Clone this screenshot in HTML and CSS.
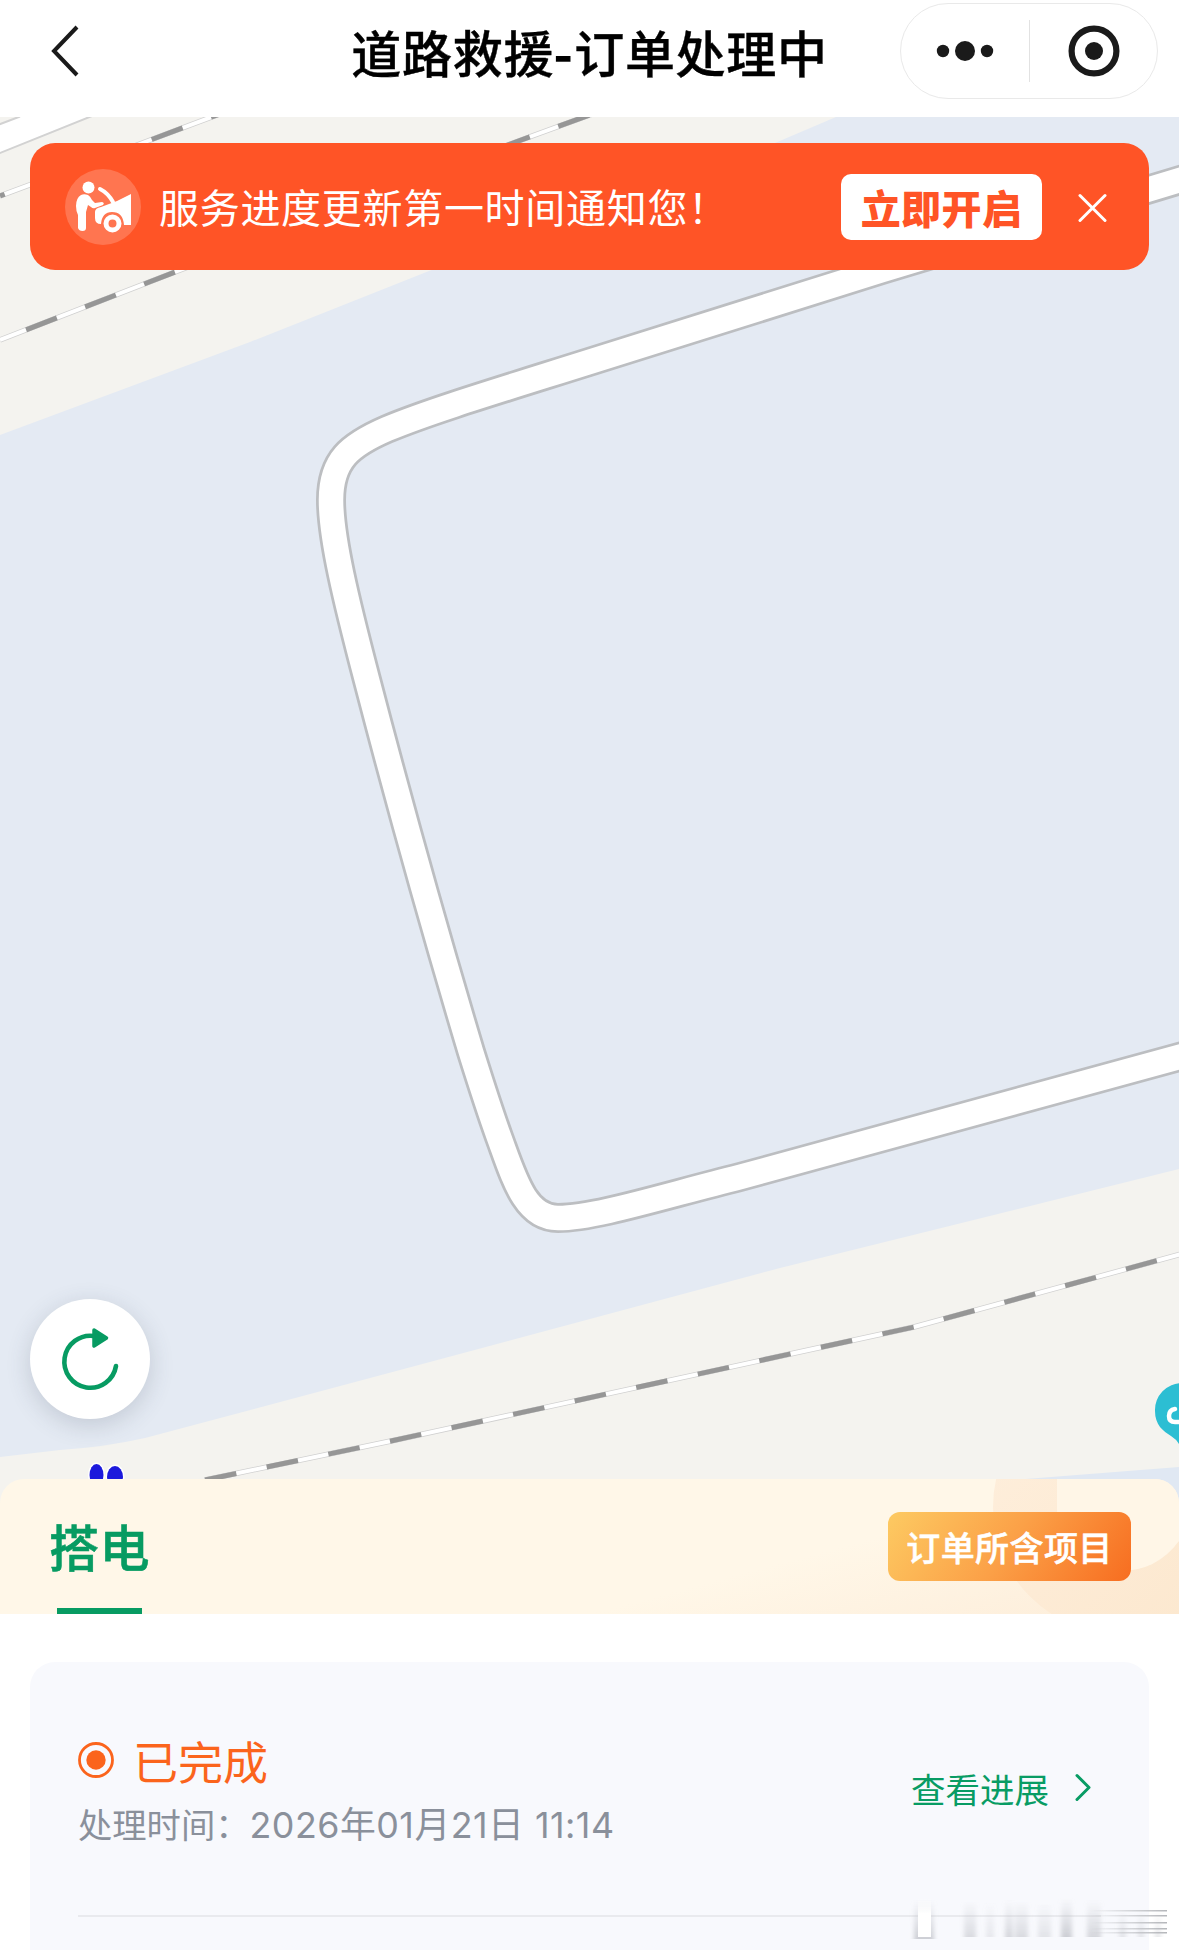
FILE: index.html
```html
<!DOCTYPE html>
<html lang="zh-CN">

<head>
  <meta charset="UTF-8" />
  <meta name="viewport" content="width=device-width, initial-scale=1.0" />
  <title>道路救援-订单处理中</title>
  <link rel="stylesheet" href="styles.css">
</head>

<body>
  <header class="navbar">
    <svg class="back" viewBox="0 0 30 54" width="30" height="54">
      <path d="M27 3 4 27l23 24" fill="none" stroke="#1a1a1a" stroke-width="4" />
    </svg>
    <h1 class="title">道路救援<span class="dash">-</span>订单处理中</h1>
    <div class="capsule">
      <svg class="capsule-item" viewBox="0 0 128 94">
        <circle cx="42" cy="47" r="6.2" />
        <circle cx="64" cy="47" r="10" />
        <circle cx="86" cy="47" r="6.2" />
      </svg>
      <span class="capsule-line"></span>
      <svg class="capsule-item" viewBox="0 0 128 94">
        <circle cx="65" cy="47" r="22.4" fill="none" stroke="#1a1a1a" stroke-width="6.2" />
        <circle cx="65" cy="47" r="9" />
      </svg>
    </div>
  </header>

  <section class="map">
    <svg class="map-canvas" viewBox="0 117 1179 1390" width="1179" height="1390">
      <!-- land -->
      <path class="land" d="M0 117H836L775 143 429 271 250 342 0 435Z" />
      <path class="land" d="M0 1457 60 1450Q105 1447 145 1438L400 1370 780 1268 1179 1169V1507H0Z" />
      <path d="M1000 1481 1179 1467V1507H1000Z" fill="#e0e8f3" />

      <!-- small road in the corner -->
      <path d="M-5 126 19 117H90L-5 155Z" fill="#fff" />
      <path d="M-5 126 20 116.500M-5 155 92 116" fill="none" stroke="#d2d2d2" stroke-width="2" />

      <!-- railways -->
      <g class="rail">
        <path class="rail-edge" d="M0 340 175 272 513 143 595 113" />
        <path class="rail-gap" d="M0 340 175 272 513 143 595 113" />
        <path class="rail-dash" d="M0 340 175 272 513 143 595 113" stroke-dasharray="33 30.300" stroke-dashoffset="-28" />

        <path class="rail-edge" d="M0 196 137 145 225 112" />
        <path class="rail-gap" d="M0 196 137 145 225 112" />
        <path class="rail-dash" d="M0 196 137 145 225 112" stroke-dasharray="33 30.300" stroke-dashoffset="28" />

        <path class="rail-edge" d="M205 1480 391 1441 914 1327 1185 1253" />
        <path class="rail-gap" d="M205 1480 391 1441 914 1327 1185 1253" />
        <path class="rail-dash" d="M205 1480 391 1441 914 1327 1185 1253" stroke-dasharray="32 31" />
      </g>

      <!-- main road, casing then fill -->
      <path class="road-casing" d="M1190 177 882 270 589 362C500 390 430 411 387 429 350 445 331 460 331 500 331 538 346 600 367 680Q416 868 471 1052C481 1084 490 1112 499 1137 514 1178 525 1218 558 1218 595 1218 660 1197 740 1177L1190 1054" />
      <path class="road-fill" d="M1190 177 882 270 589 362C500 390 430 411 387 429 350 445 331 460 331 500 331 538 346 600 367 680Q416 868 471 1052C481 1084 490 1112 499 1137 514 1178 525 1218 558 1218 595 1218 660 1197 740 1177L1190 1054" />

      <!-- markers -->
      <g fill="#1c19dc" stroke="#fff" stroke-width="3" paint-order="stroke">
        <ellipse cx="96.500" cy="1475" rx="7" ry="11" />
        <ellipse cx="115" cy="1477" rx="8" ry="11" />
      </g>
      <path d="M1182 1383a27 27 0 0 0-27 28c0 14 8 20 16 25q5 3 8 8h8v-61Z" fill="#2cbed3" />
      <path d="M1175 1409q-6 1-6 7 0 6 6 6h8" fill="none" stroke="#fff" stroke-width="4.500" stroke-linecap="round" />
    </svg>

    <div class="notice">
      <svg class="notice-icon" viewBox="0 0 76 76" width="76" height="76">
        <circle cx="38" cy="38" r="38" fill="#ff7550" />
        <g fill="#fff">
          <circle cx="23.500" cy="18.500" r="6" />
          <path d="M16 26q3-1.500 7 0 2 1 4 5l3 3 7-1q3 1 1 3l-8 3q-2 1-4-1l-3-2-2 7v16q0 3-3.500 3T13 59V46q-2-4-2-9 0-8 5-11Z" />
          <path d="m36 38 16-6 14-7v31h-7q-1-13-12-13-10 0-11 12-6 0-6-6v-6q0-4 6-5Z" />
          <path d="M35 20Q43 24 48 33" fill="none" stroke="#fff" stroke-width="4" stroke-linecap="round" />
        </g>
        <circle cx="47.500" cy="54.500" r="6.500" fill="none" stroke="#fff" stroke-width="5" />
      </svg>
      <span class="notice-text">服务进度更新第一时间通知您！</span>
      <button class="notice-btn">立即开启</button>
      <svg class="notice-close" viewBox="0 0 30 30" width="30" height="30">
        <path d="m2 3.500 25 25m0-25-25 25" stroke="#fff" stroke-width="3" stroke-linecap="round" />
      </svg>
    </div>

    <button class="refresh">
      <svg viewBox="0 0 120 120" width="120" height="120">
        <path d="M86 67A26 26 0 1 1 64 37" fill="none" stroke="#079b62" stroke-width="4.600" stroke-linecap="round" />
        <path d="m64 31 12.500 8L64 47Z" fill="#079b62" stroke="#079b62" stroke-width="3.500" stroke-linejoin="round" />
      </svg>
    </button>
  </section>

  <main class="sheet">
    <div class="tabs">
      <svg class="tabs-decor" viewBox="0 0 340 135" width="340" height="135">
        <defs>
          <linearGradient id="ring" x1="0" y1="0" x2="1" y2="1">
            <stop offset="0" stop-color="#feeedb" />
            <stop offset="1" stop-color="#fce8cf" />
          </linearGradient>
        </defs>
        <circle cx="281" cy="28" r="95" fill="none" stroke="url(#ring)" stroke-width="64" />
        <path d="M218 0h122v62q-22 30-59 30-63 0-63-64Z" fill="#fff6e7" />
      </svg>
      <div class="tab">搭电</div>
      <button class="items-btn">订单所含项目</button>
    </div>

    <div class="card">
      <div class="order">
        <div class="order-info">
          <div class="status">
            <svg viewBox="0 0 36 36" width="36" height="36">
              <circle cx="18" cy="18" r="16.500" fill="none" stroke="#fb641c" stroke-width="2.800" />
              <circle cx="18" cy="18" r="9.700" fill="#fb641c" />
            </svg>
            <span>已完成</span>
          </div>
          <div class="time">处理时间：<span class="date">2026年01月21日 11:14</span></div>
        </div>
        <a class="progress">
          <span>查看进展</span>
          <svg viewBox="0 0 18 30" width="18" height="30">
            <path d="m3 2.500 12 12L3 26.500" fill="none" stroke="#089c64" stroke-width="3" stroke-linecap="round" stroke-linejoin="round" />
          </svg>
        </a>
      </div>
    </div>

    <!-- smudged mark in the lower corner -->
    <svg class="smudge" viewBox="0 0 279 60" width="279" height="60">
      <defs>
        <linearGradient id="fade" x1="0" y1="0" x2="0" y2="1">
          <stop offset="0" stop-color="#b9bbc2" stop-opacity="0" />
          <stop offset="1" stop-color="#b0b2b9" stop-opacity=".6" />
        </linearGradient>
        <linearGradient id="bar" x1="0" y1="0" x2="0" y2="1">
          <stop offset="0" stop-color="#fff" stop-opacity="0" />
          <stop offset=".4" stop-color="#fff" />
        </linearGradient>
        <linearGradient id="streak" gradientUnits="userSpaceOnUse" x1="190" y1="0" x2="267" y2="0">
          <stop offset="0" stop-color="#b4b6ba" stop-opacity="0" />
          <stop offset="1" stop-color="#b4b6ba" />
        </linearGradient>
        <filter id="soft" x="-10%" y="-20%" width="120%" height="140%">
          <feGaussianBlur stdDeviation="2 .6" />
        </filter>
      </defs>
      <g fill="url(#fade)" filter="url(#soft)">
        <path d="M14 10h20v39H14Z" />
        <path d="M64 10h12v37H64Z" opacity=".7" />
        <path d="M86 12h8v35h-8Z" opacity=".4" />
        <path d="M105 10h8v37h-8Z" opacity=".8" />
        <path d="M115 10h13v37h-13Z" opacity=".7" />
        <path d="M138 12h13v35h-13Z" opacity=".5" />
        <path d="M161 8h11v39h-11Z" />
        <path d="M187 10h14v37h-14Z" opacity=".8" />
        <path d="M219 20h7v27h-7Z" opacity=".5" />
        <path d="M238 20h6v27h-6Z" opacity=".5" />
        <path d="M255 20h6v27h-6Z" opacity=".5" />
      </g>
      <path d="M18 8h13v39H18Z" fill="url(#bar)" />
      <path d="M190 20h77v1.500h-77ZM190 25h77v1.500h-77ZM190 32h77v1.500h-77ZM190 38h77v1.500h-77ZM190 42h77v1.500h-77Z" fill="url(#streak)" />
    </svg>
  </main>
</body>

</html>
```
FILE: styles.css
```css
* {
  box-sizing: border-box;
}

html,
body {
  margin: 0;
  height: 100%;
  background: #fff;
  font-family: "Noto Sans CJK SC", sans-serif;
  overflow: hidden;
}

body {
  display: flex;
  flex-direction: column;
}

button {
  border: 0;
  padding: 0;
  font-family: inherit;
}

svg {
  display: block;
  flex: none;
}

.navbar {
  flex: none;
  display: grid;
  grid-template-columns: 1fr auto 1fr;
  align-items: center;
  height: 117px;
  padding: 0 21px 16px 50px;
}

.title {
  margin: 0 0 0 -29px;
  font-size: 50px;
  font-weight: 500;
  line-height: 70px;
  letter-spacing: 0.7px;
  color: #000;
  white-space: nowrap;
  -webkit-text-stroke: 0.4px #000;
}

.title .dash {
  margin: 0 1.5px 0 0;
  -webkit-text-stroke: 1.4px #000;
}

.capsule {
  justify-self: end;
  display: flex;
  align-items: center;
  width: 258px;
  height: 96px;
  border: 1px solid #e9e9e9;
  border-radius: 48px;
}

.capsule-item {
  width: 128px;
  height: 94px;
  fill: #1a1a1a;
}

.capsule-line {
  flex: none;
  width: 1px;
  height: 62px;
  margin-right: -1px;
  background: #e2e2e2;
}

/* map */
.map {
  position: relative;
  flex: none;
  height: 1390px;
  background: #e4eaf3;
  overflow: hidden;
}

.land {
  fill: #f4f3ef;
}

.rail path {
  fill: none;
}

.rail-edge {
  stroke: #d0d0d0;
  stroke-width: 5.5;
}

.rail-gap {
  stroke: #fff;
  stroke-width: 4;
}

.rail-dash {
  stroke: #969696;
  stroke-width: 5;
}

.road-casing {
  fill: none;
  stroke: #bcbec1;
  stroke-width: 30;
}

.road-fill {
  fill: none;
  stroke: #fff;
  stroke-width: 24.5;
}

.notice {
  position: absolute;
  top: 26px;
  left: 30px;
  right: 30px;
  display: flex;
  align-items: center;
  height: 127px;
  padding: 0 41px 0 35px;
  border-radius: 25px;
  background: #ff5426;
}

.notice-text {
  flex: 1;
  margin: -2px 0 0 18px;
  font-size: 40px;
  letter-spacing: 0.7px;
  color: #fff;
  white-space: nowrap;
}

.notice-btn {
  width: 201px;
  height: 66px;
  border-radius: 10px;
  background: #fff;
  color: #ff5426;
  font-size: 40px;
  font-weight: 900;
  line-height: 62px;
  letter-spacing: 0.4px;
}

.notice-close {
  margin-left: 36px;
}

.refresh {
  position: absolute;
  top: 1182px;
  left: 30px;
  width: 120px;
  height: 120px;
  border-radius: 50%;
  background: #fff;
  box-shadow: 0 6px 24px rgba(60, 70, 90, 0.2);
}

/* bottom sheet */
.sheet {
  position: relative;
  flex: 1;
  display: flex;
  flex-direction: column;
  margin-top: -28px;
}

.tabs {
  position: relative;
  flex: none;
  display: flex;
  justify-content: space-between;
  align-items: center;
  height: 135px;
  padding: 0 48px 0 49px;
  border-radius: 24px 24px 0 0;
  background: linear-gradient(165deg, #fff7e8 65%, #fdedd9 100%);
  overflow: hidden;
}

.tabs-decor {
  position: absolute;
  top: 0;
  right: 0;
}

.tab {
  position: relative;
  height: 135px;
  font-size: 50px;
  font-weight: 500;
  line-height: 133px;
  letter-spacing: 0.5px;
  color: #079b62;
  -webkit-text-stroke: 0.6px #079b62;
}

.tab::after {
  content: "";
  position: absolute;
  bottom: 0;
  left: 8px;
  width: 85px;
  height: 6px;
  background: #079b62;
}

.items-btn {
  position: relative;
  width: 243px;
  height: 69px;
  border-radius: 12px;
  background: linear-gradient(125deg, #fdca62 0%, #fba047 50%, #f76d20 100%);
  color: #fff;
  font-size: 34px;
  font-weight: 500;
  line-height: 68px;
  letter-spacing: 0.4px;
  -webkit-text-stroke: 0.5px #fff;
}

.card {
  flex: 1;
  margin: 48px 30px 0;
  padding: 0 48px;
  border-radius: 25px 25px 0 0;
  background: #f8f9fd;
}

.order {
  display: flex;
  justify-content: space-between;
  align-items: center;
  height: 255px;
  padding-right: 9px;
  border-bottom: 2px solid #e9eaee;
}

.status {
  display: flex;
  align-items: center;
  gap: 19px;
  margin-top: 8px;
  font-size: 45px;
  line-height: 65px;
  color: #fb641c;
}

.time {
  font-family: Inter, "Noto Sans CJK SC", sans-serif;
  font-size: 34.3px;
  line-height: 64px;
  color: #8a909b;
  white-space: nowrap;
}

.date {
  font-size: 35.8px;
  letter-spacing: 0.5px;
}

.progress {
  display: flex;
  align-items: center;
  gap: 25px;
  margin-top: -2px;
  font-size: 34.5px;
  color: #089c64;
}

.smudge {
  position: absolute;
  right: 0;
  bottom: 0;
}
```
